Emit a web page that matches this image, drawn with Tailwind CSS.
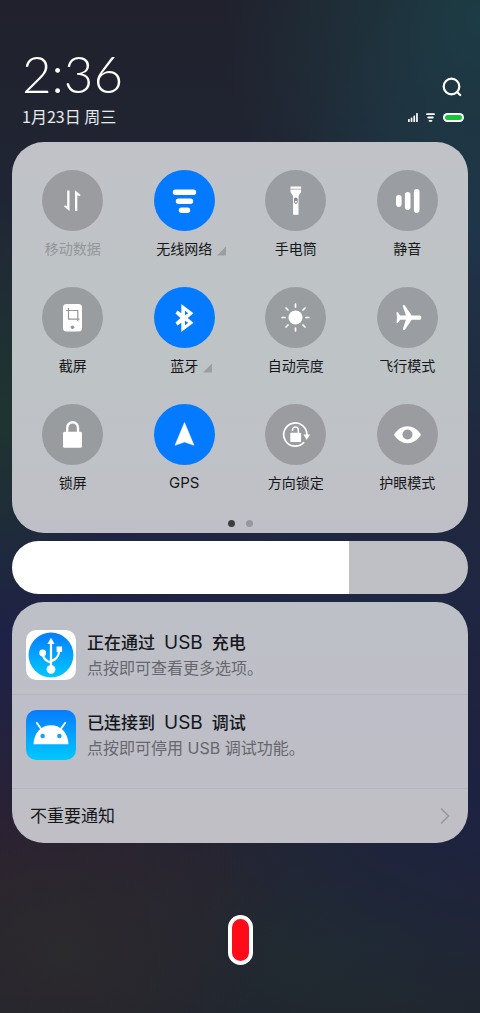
<!DOCTYPE html>
<html lang="zh-CN">
<head>
<meta charset="utf-8">
<meta name="viewport" content="width=device-width, initial-scale=1">
<title>控制中心</title>
<script src="https://cdn.jsdelivr.net/npm/@tailwindcss/browser@4"></script>
</head>
<body class="bg-[#20232f]">
<main class="flex min-h-screen flex-col px-3 font-['Inter','Noto_Sans_CJK_SC',sans-serif] text-[#16171a] bg-[radial-gradient(ellipse_260px_260px_at_100%_2%,#1d3c45,transparent),radial-gradient(ellipse_130px_220px_at_0%_41%,#1f3430,transparent),radial-gradient(ellipse_200px_240px_at_100%_22%,#20344b,transparent),radial-gradient(ellipse_320px_230px_at_0%_62%,#1e2147,transparent),radial-gradient(ellipse_280px_220px_at_100%_78%,#1c2242,transparent),radial-gradient(ellipse_200px_150px_at_13%_94%,#2b2a2d,transparent),radial-gradient(ellipse_300px_300px_at_0%_82%,#2d2130,transparent),radial-gradient(ellipse_300px_160px_at_72%_93%,#202b31,transparent),linear-gradient(#20212c,#20293a_35%,#1f2742_58%,#252430_88%,#20232e)]">

  <header class="flex items-end justify-between px-1 pt-11 pb-[14px]">
    <div class="pl-[6px]">
      <h1 class="font-['Lato'] text-[51px] font-light leading-[60px] text-white">2:36</h1>
      <p class="font-['Noto_Sans_CJK_SC',sans-serif] text-base leading-6 text-white/90">1月23日 周三</p>
    </div>
    <div class="flex flex-col items-end gap-4 pb-[6px]">
      <button type="button" aria-label="搜索" class="mr-[2px]">
        <svg class="size-5" viewBox="0 0 20 20" fill="none" stroke="#fff" stroke-width="2.200" stroke-linecap="round"><circle cx="9.500" cy="9.500" r="7.800"/><path d="M15.500 15.500l2.700 2.500"/></svg>
      </button>
      <div class="flex items-center gap-2">
        <svg class="h-[9px] w-[10px]" viewBox="0 0 10 9" fill="#fff"><rect x="0" y="6" width="1.7" height="3" rx=".6"/><rect x="2.7" y="4.4" width="1.7" height="4.6" rx=".6"/><rect x="5.4" y="2.4" width="1.7" height="6.6" rx=".6"/><rect x="8.1" width="1.7" height="9" rx=".6"/></svg>
        <svg class="h-[9px] w-[9px]" viewBox="0 0 9 9" stroke="#fff" stroke-width="1.8" stroke-linecap="round"><path d="M1 1.2h7M2.2 4.5h4.6M3.5 7.8h2"/></svg>
        <svg class="h-[9px] w-[21px]" viewBox="0 0 21 9"><rect width="21" height="9" rx="4.5" fill="#fff"/><rect x="2" y="2" width="17" height="5" rx="2.5" fill="#11c936"/></svg>
      </div>
    </div>
  </header>

  <section aria-label="快捷开关" class="rounded-[32px] bg-linear-to-b from-[#c0c2c7] via-[#bec4c6] to-[#bfc0c7] px-[5px] pt-7 pb-[6px] text-sm leading-5">
    <div class="grid grid-cols-4 gap-y-7">
      <button type="button" disabled class="flex flex-col items-center gap-2 text-[#94969a]">
        <svg class="size-[61px]" viewBox="0 0 61 61"><circle cx="30.5" cy="30.5" r="30.5" fill="#9a9ca0"/><path d="M25.200 20.500h2.300V41l-5.500-4.500 1-1.200 2.200 1zM33 41h2.300V25.200l2.200 1 1.200-1.200-5.700-4.700z" fill="#fff"/></svg>
        <span>移动数据</span>
      </button>
      <button type="button" aria-pressed="true" class="flex flex-col items-center gap-2">
        <svg class="size-[61px]" viewBox="0 0 61 61"><circle cx="30.500" cy="30.500" r="30.500" fill="#037aff"/><path d="M21.500 22.300h18M24.500 31.200h12M27.500 40.200h6" stroke="#fff" stroke-width="5.400" stroke-linecap="round"/></svg>
        <span class="relative">无线网络<svg class="absolute bottom-[3px] left-full ml-1 size-[11px]" viewBox="0 0 11 11"><path d="M1 10.500L10 1.500v9z" fill="#9b9da1"/></svg></span>
      </button>
      <button type="button" aria-pressed="false" class="flex flex-col items-center gap-2">
        <svg class="size-[61px]" viewBox="0 0 61 61"><circle cx="30.500" cy="30.500" r="30.500" fill="#9a9da1"/><path d="M25.500 16.500h10.600v2.200H25.500zM25.500 19.500h10.600v2c0 2-2.600 3-2.600 5v18.200h-5.400V26.500c0-2-2.600-3-2.600-5z" fill="#fff"/><rect x="29" y="27.500" width="3.600" height="6.400" rx="1.800" fill="#85898d"/><circle cx="30.800" cy="31.700" r="1" fill="#fff"/></svg>
        <span>手电筒</span>
      </button>
      <button type="button" aria-pressed="false" class="flex flex-col items-center gap-2">
        <svg class="size-[61px]" viewBox="0 0 61 61"><circle cx="30.500" cy="30.500" r="30.500" fill="#9a9da1"/><path d="M21.800 27.700v6.400M30.700 24.700v12.400M39.700 21.700v18.400" stroke="#fff" stroke-width="5.600" stroke-linecap="round"/></svg>
        <span>静音</span>
      </button>
      <button type="button" class="flex flex-col items-center gap-2">
        <svg class="size-[61px]" viewBox="0 0 61 61"><circle cx="30.500" cy="30.500" r="30.500" fill="#9a9da0"/><rect x="21" y="17" width="19" height="27.500" rx="3.500" fill="#fff"/><path d="M24 23.500h11.800v10.800M26.500 21v11.200h11" fill="none" stroke="#94979a" stroke-width="1.200"/><circle cx="30.500" cy="40.300" r="1.800" fill="#94979a"/></svg>
        <span>截屏</span>
      </button>
      <button type="button" aria-pressed="true" class="flex flex-col items-center gap-2">
        <svg class="size-[61px]" viewBox="0 0 61 61"><circle cx="30.500" cy="30.500" r="30.500" fill="#037aff"/><path fill-rule="evenodd" d="M27.300 17L39.500 26.300 33.700 31 39.500 35.700 27.300 45V35.700L23.500 38.500 21.500 35.500 26.500 31 21.500 26.500 23.500 23.500 27.300 26.300zM31 23.800v4.400l3.200-2zM31 33.800v4.400l3.200-2.400z" fill="#fff"/></svg>
        <span class="relative">蓝牙<svg class="absolute bottom-[3px] left-full ml-1 size-[11px]" viewBox="0 0 11 11"><path d="M1 10.500L10 1.500v9z" fill="#9b9da1"/></svg></span>
      </button>
      <button type="button" aria-pressed="false" class="flex flex-col items-center gap-2">
        <svg class="size-[61px]" viewBox="0 0 61 61"><circle cx="30.500" cy="30.500" r="30.500" fill="#9a9da0"/><circle cx="30.500" cy="30.500" r="7" fill="#fff"/><path d="M30.500 17.200v2.800M30.500 41v2.800M17.200 30.500h2.800M41 30.500h2.800M21 21l2 2M38 38l2 2M21 40l2-2M38 23l2-2" stroke="#fff" stroke-width="1.700" stroke-linecap="round"/></svg>
        <span>自动亮度</span>
      </button>
      <button type="button" aria-pressed="false" class="flex flex-col items-center gap-2">
        <svg class="size-[61px]" viewBox="0 0 61 61"><circle cx="30.500" cy="30.500" r="30.500" fill="#9a9da1"/><path d="M42.500 28.400c2.500 0 2.500 4.400 0 4.400h-7.800L28 42.500c-.8 1.200-2.600.6-2.100-.8l3-8.900h-5.700l-2.200 3c-.6.800-1.500.400-1.500-.5l.5-4.700-.5-4.700c0-.9.900-1.300 1.500-.5l2.200 3h5.700l-3-8.900c-.5-1.400 1.300-2 2.100-.8l6.700 9.700z" fill="#fff"/></svg>
        <span>飞行模式</span>
      </button>
      <button type="button" class="flex flex-col items-center gap-2">
        <svg class="size-[61px]" viewBox="0 0 61 61"><circle cx="30.500" cy="30.500" r="30.500" fill="#999c9f"/><rect x="21" y="27.800" width="19" height="16" rx="1.500" fill="#fff"/><path d="M25.200 28.500v-4.800a5.400 5.400 0 0 1 10.800 0v4.800" fill="none" stroke="#fff" stroke-width="2.400"/></svg>
        <span>锁屏</span>
      </button>
      <button type="button" aria-pressed="true" class="flex flex-col items-center gap-2">
        <svg class="size-[61px]" viewBox="0 0 61 61"><circle cx="30.500" cy="30.500" r="30.500" fill="#037aff"/><path d="M30.500 18.500L40 41.300 30.500 38 21 41.300z" fill="#fff" stroke="#fff" stroke-width=".5" stroke-linejoin="round"/></svg>
        <span class="text-[15px] leading-5">GPS</span>
      </button>
      <button type="button" aria-pressed="false" class="flex flex-col items-center gap-2">
        <svg class="size-[61px]" viewBox="0 0 61 61"><circle cx="30.500" cy="30.500" r="30.500" fill="#9a9ca0"/><path d="M38.600 38.700A11.600 11.600 0 1 1 41.900 31" fill="none" stroke="#fff" stroke-width="1.700" stroke-linecap="round"/><path d="M38.500 30.500h6.500L41.700 36z" fill="#fff"/><rect x="25.300" y="28.800" width="10.800" height="9.200" rx=".8" fill="#fff"/><path d="M27.500 27v-1.200a2.900 2.900 0 0 1 5.800 0V29" fill="none" stroke="#fff" stroke-width="1.500"/></svg>
        <span>方向锁定</span>
      </button>
      <button type="button" aria-pressed="false" class="flex flex-col items-center gap-2">
        <svg class="size-[61px]" viewBox="0 0 61 61"><circle cx="30.500" cy="30.500" r="30.500" fill="#9a9ca0"/><path d="M17 30.700C24 19.500 37 19.500 44 30.700 37 42 24 42 17 30.700z" fill="#fff"/><circle cx="30.500" cy="30.500" r="5" fill="#9a9ca0"/></svg>
        <span>护眼模式</span>
      </button>
    </div>
    <div class="mt-[27px] flex justify-center gap-[11px]">
      <span class="size-[7px] rounded-full bg-[#3c3d41]"></span>
      <span class="size-[7px] rounded-full bg-[#97989d]"></span>
    </div>
  </section>

  <input type="range" aria-label="亮度" min="0" max="100" value="74" class="mt-2 h-[53px] w-full shrink-0 appearance-none rounded-full [&::-webkit-slider-thumb]:appearance-none [&::-webkit-slider-thumb]:size-0" style="background:linear-gradient(90deg,#fff 74%,#bfc0c6 74%)">

  <section aria-label="通知" class="mt-2 overflow-hidden rounded-[32px] bg-linear-to-b from-[#bec0c7] via-[#bdbec7] to-[#c0bfc5]">
    <article class="flex items-start gap-[11px] border-b border-[#b5b6bd] px-[14px] pt-7 pb-[14px]">
      <svg class="size-[50px] shrink-0" viewBox="0 0 49 49"><defs><linearGradient id="blue" x2="0" y2="1"><stop stop-color="#087cff"/><stop offset="1" stop-color="#00c8ff"/></linearGradient></defs><rect width="49" height="49" rx="10" fill="#fff"/><circle cx="24.500" cy="24.500" r="22" fill="url(#blue)"/><path d="M24.500 38V12M24.500 32c-5-1.500-8-4-8-9.500M24.500 30.500c5-1.500 8-4 8-11.500" fill="none" stroke="#fff" stroke-width="2.200"/><path d="M24.500 7.500l3.500 6.300h-7z" fill="#fff"/><circle cx="24.500" cy="38.500" r="4.300" fill="#fff"/><circle cx="16.300" cy="22.500" r="3.300" fill="#fff"/><rect x="30" y="16.200" width="5.400" height="5.400" fill="#fff"/></svg>
      <div class="text-base leading-6">
        <h2 class="flex items-center gap-[9px] text-[17px] font-medium leading-[26px]">正在通过 <span class="text-[19px] font-normal">USB</span> 充电</h2>
        <p class="text-[#66676c]">点按即可查看更多选项。</p>
      </div>
    </article>
    <article class="flex items-start gap-[11px] border-b border-[#b5b6bd] px-[14px] pt-[15px] pb-7">
      <svg class="size-[50px] shrink-0" viewBox="0 0 49 49"><rect width="49" height="49" rx="10" fill="url(#blue)"/><path d="M7.300 33.500C8 22 15 15 24.500 15s16.500 7 17.200 18.500z" fill="#fff"/><path d="M14.500 18l-4-5.500M34.500 18l4-5.500" stroke="#fff" stroke-width="1.700" stroke-linecap="round"/><circle cx="16.300" cy="25.500" r="2.200" fill="#12a1ff"/><circle cx="32.700" cy="25.500" r="2.200" fill="#12a1ff"/></svg>
      <div class="text-base leading-6">
        <h2 class="flex items-center gap-[9px] text-[17px] font-medium leading-[26px]">已连接到 <span class="text-[19px] font-normal">USB</span> 调试</h2>
        <p class="text-[#66676c]">点按即可停用 USB 调试功能。</p>
      </div>
    </article>
    <a href="#" class="flex items-center justify-between px-[18px] py-[13px] text-[17px] leading-7">不重要通知
      <svg class="h-[18px] w-[10px]" viewBox="0 0 10 18" fill="none" stroke="#97989f" stroke-width="1.600"><path d="M1 1.500L8.500 9 1 16.500"/></svg>
    </a>
  </section>

  <button type="button" aria-label="清除通知" class="mx-auto mt-[72px] mb-12 h-[50px] w-[25px] rounded-full border-4 border-white bg-[#ff0a18]"></button>
</main>
</body>
</html>
